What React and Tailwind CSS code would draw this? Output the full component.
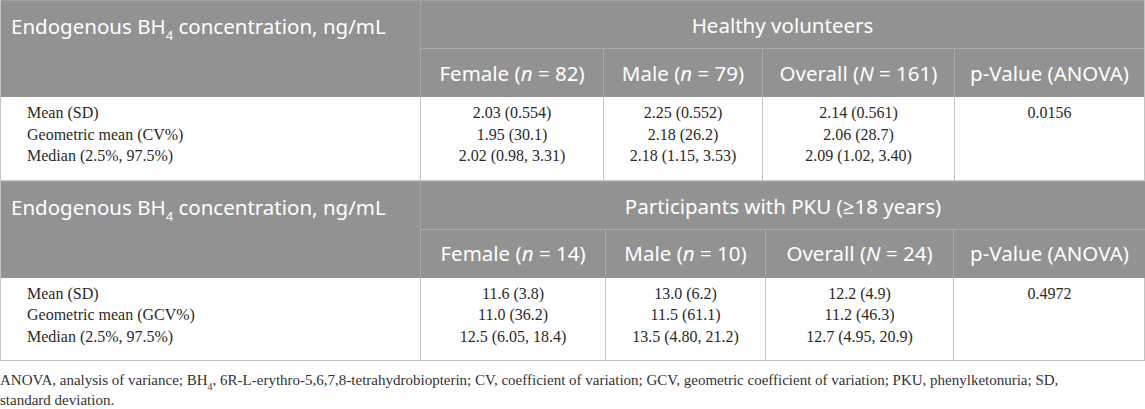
import React from 'react';

const sans = { fontFamily: '"Noto Sans", "Open Sans", sans-serif' };

const tables = [
    {
        group: 'Healthy volunteers',
        cols: 'grid-cols-[419px_183px_159px_192px_190px]',
        heads: [
            ['Female', 'n', '82'],
            ['Male', 'n', '79'],
            ['Overall', 'N', '161'],
        ],
        rows: [
            ['Mean (SD)', '2.03 (0.554)', '2.25 (0.552)', '2.14 (0.561)'],
            ['Geometric mean (CV%)', '1.95 (30.1)', '2.18 (26.2)', '2.06 (28.7)'],
            ['Median (2.5%, 97.5%)', '2.02 (0.98, 3.31)', '2.18 (1.15, 3.53)', '2.09 (1.02, 3.40)'],
        ],
        p: '0.0156',
    },
    {
        group: 'Participants with PKU (\u226518 years)',
        cols: 'grid-cols-[419px_185px_160px_188px_192px]',
        heads: [
            ['Female', 'n', '14'],
            ['Male', 'n', '10'],
            ['Overall', 'N', '24'],
        ],
        rows: [
            ['Mean (SD)', '11.6 (3.8)', '13.0 (6.2)', '12.2 (4.9)'],
            ['Geometric mean (GCV%)', '11.0 (36.2)', '11.5 (61.1)', '11.2 (46.3)'],
            ['Median (2.5%, 97.5%)', '12.5 (6.05, 18.4)', '13.5 (4.80, 21.2)', '12.7 (4.95, 20.9)'],
        ],
        p: '0.4972',
    },
];

function StatTable({ t }) {
    return (
        <div className={`grid ${t.cols} border-x border-[#c4c4c4]`}>
            {/* header */}
            <div style={sans} className="row-span-2 bg-[#929292] text-white text-[20.5px] leading-[28px] pl-[10px] pt-[11px] border-t border-[#a3a3a3]">
                Endogenous BH<sub className="text-[13px] leading-none align-[-3px]">4</sub> concentration, ng/mL
            </div>
            <div style={sans} className="col-span-4 bg-[#929292] text-white text-[20.5px] h-[48px] pt-[2px] flex items-center justify-center border-t border-l border-[#a3a3a3]">
                {t.group}
            </div>
            {t.heads.map(([label, n, v]) => (
                <div key={label} style={sans} className="bg-[#929292] text-white text-[20.5px] h-[49px] flex items-center justify-center border-t border-l border-[#a9a9a9]">
                    {label} (<i>{n}</i>&nbsp;=&nbsp;{v})
                </div>
            ))}
            <div style={sans} className="bg-[#929292] text-white text-[20.5px] h-[49px] flex items-center justify-center border-t border-l border-[#a9a9a9]">
                p-Value (ANOVA)
            </div>

            {/* body */}
            <div className="font-['Liberation_Serif',serif] text-[16px] leading-[21.5px] text-[#2a2a2a] pl-[26px] pt-[5px] pb-[13px] border-b border-[#c4c4c4]">
                {t.rows.map(r => <div key={r[0]}>{r[0]}</div>)}
            </div>
            {[1, 2, 3].map(i => (
                <div key={i} className="font-['Liberation_Serif',serif] text-[16px] leading-[21.5px] text-[#2a2a2a] text-center pt-[5px] pb-[13px] border-l border-b border-[#c4c4c4]">
                    {t.rows.map(r => <div key={r[0]}>{r[i]}</div>)}
                </div>
            ))}
            <div className="font-['Liberation_Serif',serif] text-[16px] leading-[21.5px] text-[#2a2a2a] text-center pt-[5px] pb-[13px] border-l border-b border-[#c4c4c4]">
                {t.p}
            </div>
        </div>
    );
}

export default function App() {
    return (
        <div className="w-[1145px] h-[409px] bg-white overflow-hidden">
            <div className="w-[1145px]">
                {tables.map(t => <StatTable key={t.group} t={t} />)}
            </div>
            <p className="font-['Liberation_Serif',serif] text-[15px] leading-[20px] text-[#333] mt-[9px] max-w-[1095px]">
                ANOVA, analysis of variance; BH<sub className="text-[10px] leading-none align-[-2px]">4</sub>, 6R-L-erythro-5,6,7,8-tetrahydrobiopterin; CV, coefficient of variation; GCV, geometric coefficient of variation; PKU, phenylketonuria; SD, standard deviation.
            </p>
        </div>
    );
}
